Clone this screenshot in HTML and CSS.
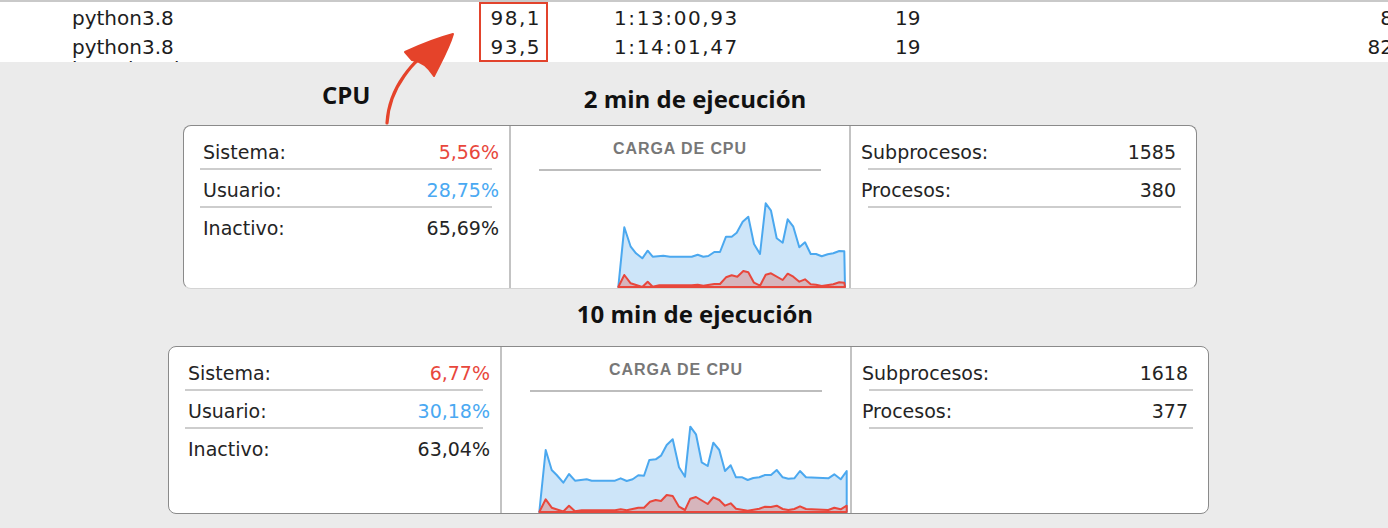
FILE: index.html
```html
<!DOCTYPE html>
<html lang="es">
<head>
<meta charset="utf-8">
<title>CPU</title>
<link rel="stylesheet" href="styles.css">
</head>
<body>
<div class="page">
  <div class="proc-table">
    <div class="proc-row row-1">
      <span class="c-name">python3.8</span><span class="c-cpu">98,1</span><span class="c-time">1:13:00,93</span><span class="c-threads">19</span><span class="c-last">8</span>
    </div>
    <div class="proc-row row-2">
      <span class="c-name">python3.8</span><span class="c-cpu">93,5</span><span class="c-time">1:14:01,47</span><span class="c-threads">19</span><span class="c-last">82</span>
    </div>
    <div class="proc-row row-3">
      <span class="c-name">kernel_task</span><span class="c-cpu">7,7</span><span class="c-time">1:05:47,38</span><span class="c-threads">2</span><span class="c-last">0</span>
    </div>
  </div>

  <section class="run run-a">
    <h2 class="run-title">2 min de ejecución</h2>
    <div class="monitor monitor-a">
      <div class="stats stats-left">
        <div class="stat"><span class="stat-label">Sistema:</span><span class="stat-val sys">5,56%</span></div>
        <div class="stat"><span class="stat-label">Usuario:</span><span class="stat-val usr">28,75%</span></div>
        <div class="stat stat-last"><span class="stat-label">Inactivo:</span><span class="stat-val">65,69%</span></div>
      </div>
      <div class="load">
        <div class="load-title">CARGA DE CPU</div>
        <div class="load-rule"></div>
        <svg class="chart" width="338" height="117" viewBox="511 171 338 117">
          <polygon class="area-user" points="618.3,287 624.3,227.3 630.7,246.7 636,253.3 642.3,258.3 647.7,250.7 652.7,256.7 663.3,255.7 670,256.7 691.7,256.7 697.7,254.7 703.3,256.7 708.3,256 714.3,252 720,252 726,236.7 731.7,236.7 736.7,232.7 742.7,221.7 748.3,216.7 754,244 760,254 765.7,203.3 771,210.7 776.7,238.3 782.7,242.7 787.7,219.3 793.3,226.7 799.3,247.3 805,242.3 810.7,254 816,254 821.7,256.3 827.7,254.3 833.3,253.3 839.3,251 844.3,251.3 845,287"/>
          <polygon class="area-sys" points="618.3,287 624.3,275 630.7,283.3 642.3,287 647.7,281.7 652.7,286.7 659.3,285.3 691.7,285.3 697.7,284.7 703.3,285.7 714.3,284 720,284 726,277.3 731.7,275.3 737.3,276.7 743.3,271 748.3,272.3 754,282.7 760,285.7 765.7,274.7 771,273.3 782.7,280 787.7,273.7 793.3,276.7 799.3,281.7 805,279.3 810.7,284.3 816,284.7 821.7,286 833.3,284.3 839.3,282.3 844.3,282.7 845,287"/>
        </svg>
      </div>
      <div class="stats stats-right">
        <div class="stat"><span class="stat-label">Subprocesos:</span><span class="stat-val">1585</span></div>
        <div class="stat"><span class="stat-label">Procesos:</span><span class="stat-val">380</span></div>
      </div>
    </div>
  </section>

  <section class="run run-b">
    <h2 class="run-title">10 min de ejecución</h2>
    <div class="monitor monitor-b">
      <div class="stats stats-left">
        <div class="stat"><span class="stat-label">Sistema:</span><span class="stat-val sys">6,77%</span></div>
        <div class="stat"><span class="stat-label">Usuario:</span><span class="stat-val usr">30,18%</span></div>
        <div class="stat stat-last"><span class="stat-label">Inactivo:</span><span class="stat-val">63,04%</span></div>
      </div>
      <div class="load">
        <div class="load-title">CARGA DE CPU</div>
        <div class="load-rule"></div>
        <svg class="chart" width="348" height="120" viewBox="502 393 348 120">
          <polygon class="area-user" points="539.3,512 545.7,450 551.7,470 556.7,475 563.3,482.7 569,474 575,480.7 586.7,479.3 591.7,480.7 615,480.7 620.7,478.3 626.7,481 632.7,479.3 638.3,475.3 644,475.7 649.3,460 655.7,459.3 661,455.7 666.7,445 672.7,439.3 679,467.3 685,476.7 690.3,426.7 696,434.3 701.7,462.3 707.7,466 713.3,442.7 719.3,450 725,471 730.7,465.3 736,477.3 742.3,477.3 747.7,480 753.3,478 759.3,477.3 765,475 771,475 776.7,470 782.7,477.3 788.3,478.7 794.3,478.3 800,471 806,477.3 828.3,478.3 834.3,474.3 840.7,479.3 846.7,471 846.7,512"/>
          <polygon class="area-sys" points="539.3,512 545.7,499.3 551.7,507.7 563.3,511.5 569,505.7 575,511.3 581.7,510.3 615,510.3 620.7,509.3 626.7,510.3 638.3,507.7 644,507.7 650,501.7 655.7,500 661,501 666.7,495 672.7,496 679,506.7 685,510 690.3,498.7 696,497 707.7,504 713.3,497.3 719.3,500 725,505.7 730.7,503.3 736,508.7 747.7,510.7 759.3,508.7 765,506.7 771,507 776.7,505.7 782.7,509 788.3,510 794.3,509 800,506.3 806,509 828.3,510 834.3,507.7 840.7,509.3 846.7,505.7 846.7,512"/>
        </svg>
      </div>
      <div class="stats stats-right">
        <div class="stat"><span class="stat-label">Subprocesos:</span><span class="stat-val">1618</span></div>
        <div class="stat"><span class="stat-label">Procesos:</span><span class="stat-val">377</span></div>
      </div>
    </div>
  </section>

  <div class="highlight"></div>
  <svg class="arrow" width="180" height="110" viewBox="300 20 180 110">
    <path class="arrow-shaft" d="M387 123 C 388 106, 394 90, 404 76 C 409 69, 413 64, 418 60"/>
    <path class="arrow-head" d="M405 52 C 420 45, 438 38, 453 34 C 449 48, 441 62, 434 76 C 429 68, 421 61, 412 60 Z"/>
  </svg>
  <span class="cpu-note">CPU</span>
</div>
</body>
</html>
```

FILE: styles.css
```css
* {
  box-sizing: border-box;
  margin: 0;
  padding: 0;
}

html,
body {
  width: 1388px;
  height: 528px;
  overflow: hidden;
}

body {
  background: #ebebeb;
  font-family: "DejaVu Sans", "Liberation Sans", sans-serif;
  color: #222;
}

.page {
  position: relative;
  height: 528px;
}

/* ---------- process table strip ---------- */
.proc-table {
  height: 62px;
  overflow: hidden;
  background: #fff;
  border-top: 2px solid #c9c9c9;
  margin-right: -5px;
}

.proc-row {
  display: grid;
  grid-template-columns: 405px 64px 354px 1fr auto;
  padding-left: 72px;
  height: 29px;
  line-height: 29px;
  font-size: 20px;
  color: #1d1d1d;
  white-space: nowrap;
}

.row-1 {
  margin-top: 2px;
}

.row-3 {
  margin-top: -7px;
}

.c-cpu {
  text-align: right;
  letter-spacing: 1.5px;
}

.c-time {
  padding-left: 73px;
  letter-spacing: 1.6px;
}

.c-last {
  text-align: right;
}

/* ---------- runs ---------- */
.run {
  display: flex;
  flex-direction: column;
}

.run-title {
  font-family: "Open Sans", sans-serif;
  font-weight: 700;
  font-size: 24px;
  line-height: 28px;
  color: #111;
  text-align: center;
  padding-left: 2px;
}

.run-a .run-title {
  margin-top: 23px;
  margin-bottom: 12px;
}

.run-b .run-title {
  margin-top: 11px;
  margin-bottom: 18px;
}

.monitor {
  display: grid;
  background: #fff;
  border: 1.5px solid #8a8a8a;
  border-radius: 8px;
}

.monitor-a {
  margin-left: 183px;
  width: 1014px;
  height: 164px;
  grid-template-columns: 325px 342px 1fr;
  border-bottom-color: #d4d4d4;
}

.monitor-b {
  margin-left: 168px;
  width: 1041px;
  height: 168px;
  grid-template-columns: 331px 352px 1fr;
}

/* stats columns */
.stats {
  padding-top: 6px;
  font-size: 19px;
}

.stat {
  display: flex;
  justify-content: space-between;
  height: 38px;
  padding-top: 4px;
  line-height: 32px;
  border-bottom: 2px solid #cdcdcd;
  color: #242424;
}

.stat-last {
  border-bottom: none;
}

.stats-left .stat {
  margin: 0 17px 0 16px;
}

.stats-left .stat-label {
  padding-left: 3px;
}

.stats-left .stat-val {
  margin-right: -7px;
}

.stats-right .stat {
  margin: 0 15px 0 17px;
}

.stats-right .stat-label {
  margin-left: -7px;
}

.stats-right .stat-val {
  margin-right: 5px;
}

.sys {
  color: #e8473c;
}

.usr {
  color: #4aa9f2;
}

/* cpu load column */
.load {
  display: flex;
  flex-direction: column;
  border-left: 2px solid #c3c3c3;
  border-right: 2px solid #c3c3c3;
  overflow: hidden;
}

.load-title {
  margin-top: 13px;
  height: 20px;
  line-height: 20px;
  text-align: center;
  font-family: "Liberation Sans", sans-serif;
  font-weight: 700;
  font-size: 16px;
  letter-spacing: 0.9px;
  color: #777;
}

.load-rule {
  margin: 10px 28px 0 28px;
  height: 2px;
  background: #bdbdbd;
}

.chart {
  display: block;
  margin-top: auto;
}

.area-user {
  fill: #cde5f9;
  stroke: #4ba8ef;
  stroke-width: 2;
  stroke-linejoin: round;
}

.area-sys {
  fill: #d6b5bc;
  stroke: #e8473c;
  stroke-width: 2;
  stroke-linejoin: round;
}

/* ---------- annotations ---------- */
.highlight {
  position: absolute;
  left: 479px;
  top: 2px;
  width: 69px;
  height: 60px;
  border: 2px solid #e2432c;
}

.arrow {
  position: absolute;
  left: 300px;
  top: 20px;
}

.arrow-shaft {
  fill: none;
  stroke: #e5432a;
  stroke-width: 3.2;
  stroke-linecap: round;
}

.arrow-head {
  fill: #e5432a;
  stroke: #e5432a;
  stroke-width: 2;
  stroke-linejoin: round;
}

.cpu-note {
  position: absolute;
  left: 322px;
  top: 79px;
  font-family: "Open Sans", sans-serif;
  font-weight: 700;
  font-size: 24px;
  line-height: 32px;
  color: #111;
}
```
